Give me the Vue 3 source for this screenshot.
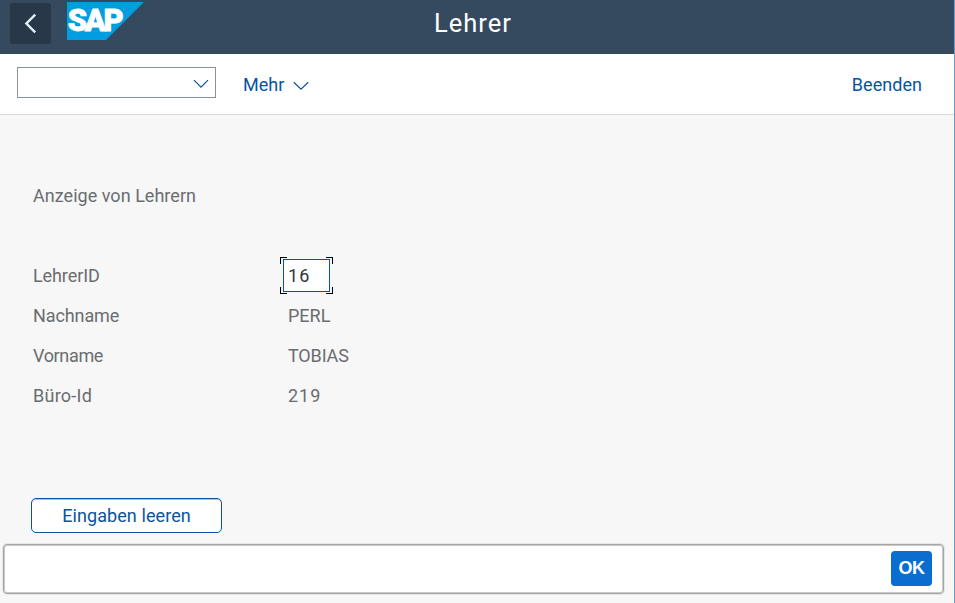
<script setup>
const rows = [
  { label: 'Nachname', value: 'PERL', key: 'nachname' },
  { label: 'Vorname', value: 'TOBIAS', key: 'vorname' },
  { label: 'Büro-Id', value: '219', key: 'buero' },
]
</script>

<template>
  <div class="window">
    <header class="shell">
      <button class="back" aria-label="Zurück">
        <svg width="41" height="41" viewBox="0 0 41 41"><path d="M25.2 11.6 16.4 20.5 25.2 29.4" /></svg>
      </button>
      <svg class="logo" width="77" height="38" viewBox="0 0 77 38">
        <path d="M0 0H77L39 38H0Z" />
        <text x="0.7" y="29.3">SAP</text>
      </svg>
      <h1 class="title">Lehrer</h1>
    </header>

    <nav class="toolbar">
      <div class="combo">
        <svg width="16" height="10" viewBox="0 0 16 10"><path d="M1 1.2 8 8.2 15 1.2" /></svg>
      </div>
      <button class="more">
        <span class="more-text">Mehr</span>
        <svg width="16" height="10" viewBox="0 0 16 10"><path d="M0.8 1.2 8 8.2 15.2 1.2" /></svg>
      </button>
      <button class="exit">Beenden</button>
    </nav>

    <main class="content">
      <p class="heading">Anzeige von Lehrern</p>
      <div class="row lehrerid">
        <span class="label">LehrerID</span>
        <div class="field">
          <span class="input">16</span>
          <i class="corner tl"></i><i class="corner tr"></i><i class="corner bl"></i><i class="corner br"></i>
        </div>
      </div>
      <div v-for="r in rows" :key="r.key" class="row" :class="r.key">
        <span class="label">{{ r.label }}</span>
        <span class="value">{{ r.value }}</span>
      </div>
      <button class="clear">Eingaben leeren</button>
    </main>

    <footer class="status">
      <button class="ok">OK</button>
    </footer>
  </div>
</template>

<style>
body { background: #f7f7f7; }
</style>

<style scoped>
* { box-sizing: border-box; }
button { margin: 0; padding: 0; border: 0; background: none; font: inherit; color: inherit; }
.window {
  width: 955px; height: 603px; overflow: hidden;
  display: flex; flex-direction: column;
  background: #f7f7f7; border-right: 1px solid #6f9bc3;
  font: 18px/40px Roboto, "Liberation Sans", sans-serif; white-space: nowrap;
}
.shell {
  height: 54px; flex: none; background: #354a5f;
  display: grid; grid-template-columns: 57px 367px 1fr; align-items: start;
  padding-left: 10px;
}
svg path { fill: none; stroke: #0854a0; stroke-width: 1.2; }
.back { width: 41px; height: 41px; margin-top: 3px; background: #283848; border-radius: 3px; }
.back svg { display: block; }
.back path { stroke: #e6f1fb; stroke-width: 2.4; }
.logo { display: block; margin-top: 2px; }
.logo path { stroke: none; fill: #009de0; }
.logo text { font: 900 31px Roboto, sans-serif; letter-spacing: -2.4px; fill: #fff; stroke: #fff; stroke-width: 0.8; }
.title { margin: 3px 0 0; font-size: 25.5px; line-height: 40px; font-weight: 400; letter-spacing: 1px; color: #fff; }
.toolbar {
  height: 61px; flex: none; background: #fff; border-bottom: 1px solid #d9d9d9;
  display: flex; align-items: center; padding: 0 32px 0 17px; color: #0854a0;
}
.combo {
  width: 199px; height: 31px; border: 1px solid #89919a;
  display: flex; align-items: center; justify-content: flex-end; padding: 2px 6px 0 0; margin-top: -3px;
}
.more { display: flex; align-items: center; gap: 9px; margin-left: 27px; padding-top: 1px; }
.more svg { margin-top: 3px; }
.exit { margin-left: auto; padding-top: 2px; letter-spacing: 0.05px; }
.more-text { padding-top: 1px; }
.content { flex: none; height: 429px; padding: 61px 31px 0; color: #6a6d70; }
.heading { margin: 0 0 40px 2px; line-height: 40px; letter-spacing: 0.03px; }
.row { height: 40px; display: grid; grid-template-columns: 249px 1fr; padding-left: 2px; }
.value { padding-left: 6px; }
.lehrerid .label, .nachname .label { letter-spacing: -0.1px; }
.vorname .label { letter-spacing: -0.35px; }
.vorname .value { letter-spacing: -0.15px; }
.buero .label { letter-spacing: 0.25px; }
.buero .value { letter-spacing: 1px; }
.field { position: relative; width: 53px; height: 37px; margin: 1px 0 0 -2px; padding: 2px 3px; }
.input {
  display: block; width: 47px; height: 33px; border: 1px solid #0854a0; background: #fff;
  color: #32363a; line-height: 32px; padding-left: 4px; letter-spacing: 1.1px;
}
.corner { position: absolute; width: 7px; height: 7px; border: 0 solid #000; }
.tl { left: 0; top: 0; border-width: 1px 0 0 1px; }
.tr { right: 0; top: 0; border-width: 1px 1px 0 0; }
.bl { left: 0; bottom: 0; border-width: 0 0 1px 1px; }
.br { right: 0; bottom: 0; border-width: 0 1px 1px 0; }
.clear {
  display: block; width: 191px; height: 35px; margin-top: 82px; letter-spacing: 0.08px;
  border: 1px solid #0854a0; border-radius: 5px; background: #fff; color: #0854a0; line-height: 33px;
  box-shadow: inset 0 1px #a9c4df;
}
.status {
  width: 941px; height: 50px; margin-left: 3px; flex: none;
  background: #fff; border: 1px solid #a6a6a6; border-radius: 4px;
  box-shadow: inset 0 0 0 1px #c9c9c9, 0 0 0 1px #e6e6e6;
  display: flex; align-items: center; justify-content: flex-end; padding-right: 11px;
}
.ok {
  width: 41px; height: 35px; margin-top: -1px; border-radius: 4px; background: #0a6ed1; color: #fff;
  font: 700 18px/35px "Liberation Sans", sans-serif; letter-spacing: -0.4px;
}
</style>
